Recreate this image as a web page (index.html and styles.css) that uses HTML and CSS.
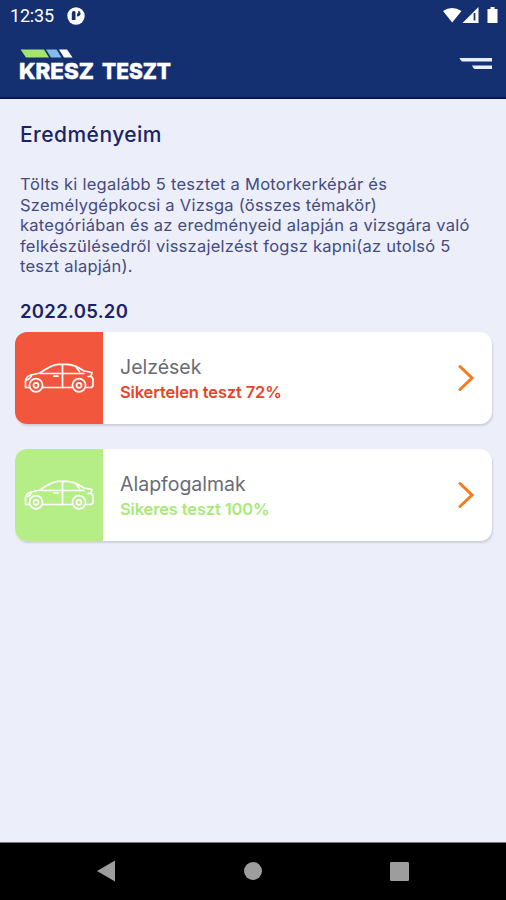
FILE: index.html
```html
<!DOCTYPE html>
<html lang="hu">
<head>
<meta charset="utf-8">
<title>KRESZ TESZT</title>
<link rel="stylesheet" href="styles.css">
</head>
<body>
<svg width="0" height="0" class="defs" aria-hidden="true">
  <symbol id="car" viewBox="0 0 70 30">
    <g fill="none" stroke="currentColor" stroke-width="1.7" stroke-linejoin="round" stroke-linecap="round">
      <path d="M5 24.500H1.500V18Q2 13.500 7 12L16 10Q27 1.800 34 1.300H43Q51 1.500 60 8L68 9.500L67 13L69 16V22Q69 24.500 66 24.500H62"/>
      <path d="M19 24.500H48"/>
      <path d="M16 10.500H60M38.500 1.500V24.500M52 4L55.500 8.500"/>
      <path d="M30 13.200H34"/>
      <circle cx="12" cy="22.300" r="6.600"/><circle cx="12" cy="22.300" r="2.500"/>
      <circle cx="55" cy="22.300" r="6.600"/><circle cx="55" cy="22.300" r="2.500"/>
      <path d="M2 17Q6 16.500 7.500 12.500M67 13.500H64"/>
    </g>
  </symbol>
</svg>
<div class="screen">
  <header class="top">
    <div class="status">
      <span class="clock">12:35</span>
      <svg class="badge" width="18" height="18" viewBox="0 0 18 18"><circle cx="9" cy="9" r="8.700" fill="#fff"/><path d="M6.500 3.800Q4.800 4.500 4.800 6.500V13H8.500V5.500Q8.500 3.800 6.500 3.800Z" fill="#153071"/><path d="M10 9.500Q13.600 9.300 13.600 6.300Q13.400 3.800 11.200 3.800V6.500H10Z" fill="#153071"/></svg>
      <svg class="signals" width="58" height="20" viewBox="0 0 58 20"><path d="M3 5Q12 -1 21.500 5L12.200 16.500Z" fill="#fff"/><path d="M22.500 17L38.500 1V17Z" fill="#fff"/><path d="M34.500 7V14.500" stroke="#153071" stroke-width="1.700"/><path d="M48.500 3H50.500V1H54.500V3H57.500V17H47.500V3Z" fill="#fff"/></svg>
    </div>
    <div class="brandbar">
      <svg class="logo" width="156" height="40" viewBox="0 0 156 40">
        <path d="M0.500 1.500H24L29 9.500H6Z" fill="#a6e36f"/><path d="M26 1.500H36.500L41.500 9.500H31Z" fill="#85bce8"/><path d="M39 1.500H47L52.500 9.500H44Z" fill="#fff"/>
        <text class="logo-text" x="-1" y="30.500" textLength="75" lengthAdjust="spacingAndGlyphs">KRESZ</text>
        <text class="logo-text" x="82" y="30.500" textLength="69" lengthAdjust="spacingAndGlyphs">TESZT</text>
      </svg>
      <svg class="menu" width="34" height="14" viewBox="0 0 34 14"><path d="M0.500 1H33V4.500H3Q1.500 3.500 0.500 1ZM13 8.500H33V12H15.500Q14 11 13 8.500Z" fill="#e9eefb"/></svg>
    </div>
  </header>
  <main>
    <h1>Eredményeim</h1>
    <p class="intro">Tölts ki legalább 5 tesztet a Motorkerképár és<br>Személygépkocsi a Vizsga (összes témakör)<br>kategóriában és az eredményeid alapján a vizsgára való<br>felkészülésedről visszajelzést fogsz kapni(az utolsó 5<br>teszt alapján).</p>
    <h2>2022.05.20</h2>
    <article class="card failed">
      <div class="thumb"><svg width="70" height="30"><use href="#car"/></svg></div>
      <div class="info"><div class="name">Jelzések</div><div class="result">Sikertelen teszt 72%</div></div>
      <svg class="chevron" width="17" height="28" viewBox="0 0 17 28"><path d="M2 2.500L14 14L2 25.500" fill="none" stroke="#f77a1c" stroke-width="3" stroke-linecap="round"/></svg>
    </article>
    <article class="card passed">
      <div class="thumb"><svg width="70" height="30"><use href="#car"/></svg></div>
      <div class="info"><div class="name">Alapfogalmak</div><div class="result">Sikeres teszt 100%</div></div>
      <svg class="chevron" width="17" height="28" viewBox="0 0 17 28"><path d="M2 2.500L14 14L2 25.500" fill="none" stroke="#f77a1c" stroke-width="3" stroke-linecap="round"/></svg>
    </article>
  </main>
  <nav>
    <svg width="18" height="22" viewBox="0 0 18 22"><path d="M0 11L18 0.500V21.500Z" fill="#9d9d9d"/></svg>
    <svg width="18" height="18" viewBox="0 0 18 18"><circle cx="9" cy="9" r="9" fill="#9d9d9d"/></svg>
    <svg width="19" height="19" viewBox="0 0 19 19"><rect width="19" height="19" rx="1.200" fill="#9d9d9d"/></svg>
  </nav>
</div>
</body>
</html>
```

FILE: styles.css
```css
* { box-sizing: border-box; }
body { margin: 0; font-family: Inter, "Liberation Sans", sans-serif; }
svg { display: block; flex: none; }
.defs { position: absolute; }
.screen { width: 506px; height: 900px; display: flex; flex-direction: column; background: #eceef9; overflow: hidden; }
.top { height: 99px; background: #153071; border-bottom: 2px solid #07145c; flex: none; }
.status { height: 32px; display: flex; align-items: center; padding: 0 8px 0 10px; color: #fff; }
.clock { font: 400 18px/32px Roboto, sans-serif; width: 57px; letter-spacing: -0.200px; }
.badge { margin-top: -1px; }
.signals { margin-left: auto; margin-right: 0; }
.brandbar { display: flex; align-items: flex-start; justify-content: space-between; padding: 16px 13px 0 20px; }
.logo { overflow: visible; }
.logo-text { font: 800 22px Inter, sans-serif; fill: #fff; stroke: #fff; stroke-width: 0.500px; }
.menu { margin-top: 9px; }
main { flex: 1; padding: 23px 14px 0 15px; }
h1 { margin: 0 0 26px 5px; font-size: 21px; line-height: 26px; font-weight: 500; letter-spacing: 0.450px; color: #1b2465; }
.intro { margin: 0 0 22px 5px; font-size: 16.500px; line-height: 20.600px; letter-spacing: 0.250px; color: #444b80; white-space: nowrap; }
h2 { margin: 0 0 9px 5px; font-size: 18.500px; line-height: 24px; font-weight: 600; letter-spacing: 0.300px; color: #1b2465; }
.card { height: 92px; margin-bottom: 25px; display: flex; align-items: center; background: #fff; border-radius: 12px; overflow: hidden; box-shadow: 1px 2px 2px #cdd0db; padding-right: 17px; }
.thumb { width: 88px; height: 100%; display: flex; align-items: center; justify-content: center; color: #fff; }
.failed .thumb { background: #f2563c; }
.passed .thumb { background: #b5ee87; }
.info { flex: 1; padding-left: 17px; padding-top: 2px; white-space: nowrap; }
.name { font-size: 19.500px; line-height: 26px; letter-spacing: 0; color: #686b76; }
.result { font-size: 16.500px; line-height: 24px; font-weight: 600; letter-spacing: -0.150px; }
.failed .result { color: #e6432b; }
.passed .result { color: #aae878; }
nav { height: 58px; flex: none; background: #000; border-top: 1px solid #777; display: flex; align-items: center; justify-content: space-between; padding: 0 97px 1px; }
```
